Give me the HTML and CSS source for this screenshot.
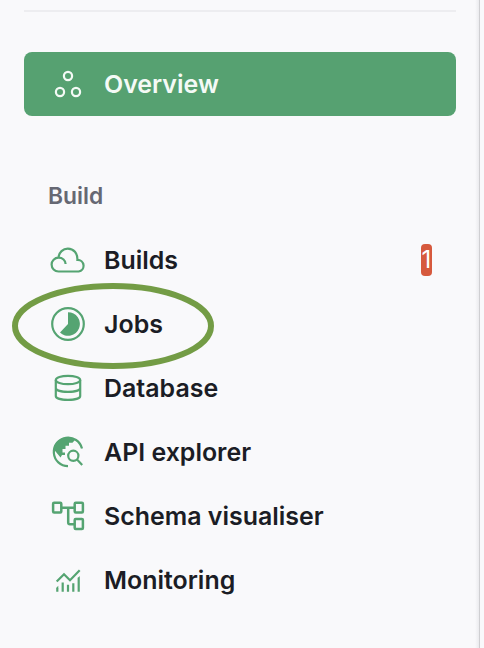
FILE: index.html
```html
<!DOCTYPE html>
<html lang="en">
<head>
<meta charset="utf-8">
<title>Navigation</title>
<link rel="stylesheet" href="styles.css">
</head>
<body>
<nav class="sidebar">
  <hr class="divider">
  <a class="item active">
    <svg class="icon" viewBox="0 0 40 40"><circle cx="20" cy="12" r="4.1"/><circle cx="12" cy="28" r="4.1"/><circle cx="28" cy="28" r="4.1"/></svg>
    <span>Overview</span>
  </a>
  <h2 class="heading">Build</h2>
  <a class="item">
    <svg class="icon" viewBox="0 0 40 40"><path d="M10.5 31.5A6.9 6.9 0 0 1 10.5 17.7C14.5 17.7 17.6 20.3 17.6 24M10.5 17.7C11 12.4 15 8.6 19.8 8.6C25.7 8.6 29.7 13.2 29.4 19.8A5.9 5.9 0 0 1 30.7 31.5H10.5"/></svg>
    <span>Builds</span>
    <span class="badge">1</span>
  </a>
  <a class="item">
    <svg class="icon" viewBox="0 0 40 40"><circle cx="20" cy="20" r="15.8"/><path class="solid" d="M20 8.2A11.8 11.8 0 1 1 12 28.6L20 20Z"/></svg>
    <span>Jobs</span>
    <svg class="ring" viewBox="0 0 204 88"><ellipse cx="102" cy="44" rx="98" ry="40"/></svg>
  </a>
  <a class="item">
    <svg class="icon" viewBox="0 0 40 40"><ellipse cx="20" cy="12" rx="12.2" ry="4.2"/><path d="M7.8 12V28C7.8 33.2 32.2 33.2 32.2 28V12M7.8 20C7.8 25.2 32.2 25.2 32.2 20"/></svg>
    <span>Database</span>
  </a>
  <a class="item">
    <svg class="icon" viewBox="0 0 40 40"><path d="M34 16.5A14.3 14.3 0 1 0 20 34.2"/><path class="solid" d="M5.5 17C7 9.5 13 5 20 5.2L26.5 7.2V8.5L24.5 10.7H21V13.7H17.5V17H14.5V20.5H17V23H14L12.5 25.5Z"/><circle cx="25.3" cy="23.8" r="5.1"/><path d="M29 27.6L34.2 32.9"/></svg>
    <span>API explorer</span>
  </a>
  <a class="item">
    <svg class="icon" viewBox="0 0 40 40"><g stroke-width="2.5"><rect x="5.1" y="6.8" width="8.2" height="9.8" rx="1"/><rect x="26.7" y="6.8" width="8.2" height="9.8" rx="1"/><rect x="26.7" y="23.1" width="8.2" height="9.8" rx="1"/><path d="M14 11.7H26M20.2 12V26.5Q20.2 28.3 22 28.3H26"/></g></svg>
    <span>Schema visualiser</span>
  </a>
  <a class="item">
    <svg class="icon" viewBox="0 0 40 40"><path d="M8.7 21.5L16 14.2L22 20.2L31.7 10.3"/><path d="M9.3 31.7V28M14.7 31.7V22.6M20 31.7V24.7M25.3 31.7V23.2M30.7 31.7V17.7"/><path class="solid" d="M8.3 28.2V27.8L10.3 25.8V28.2ZM29.7 18V18L31.7 16V18Z"/></svg>
    <span>Monitoring</span>
  </a>
</nav>
</body>
</html>
```
FILE: styles.css
```css
* { box-sizing: border-box; }

body {
  margin: 0;
  background: #f9f9fb;
  font-family: Inter, sans-serif;
  color: #1b1d25;
}

.sidebar {
  width: 480px;
  height: 648px;
  padding: 10px 24px 0;
  border-right: 1px solid #cfcfd2;
  background: linear-gradient(to left, #ebebee, #f9f9fb 4px);
  overflow: hidden;
}

.divider {
  height: 2px;
  margin: 0 0 40px;
  border: 0;
  background: #ededf0;
  width: 432px;
}

.item {
  position: relative;
  display: flex;
  align-items: center;
  gap: 16px;
  width: 432px;
  height: 64px;
  padding: 0 24px;
  font-size: 24.95px;
  line-height: 32px;
  font-weight: 600;
}

.active {
  border-radius: 8px;
  background: #56a171;
  color: #f4faf6;
}

.icon {
  width: 40px;
  height: 40px;
  fill: none;
  stroke: #55a472;
  stroke-width: 2.2;
}

.active .icon { stroke: #f4faf6; }

.solid {
  fill: #55a472;
  stroke: none;
}

.heading {
  height: 64px;
  margin: 48px 0 0;
  padding-left: 24px;
  font-size: 22.8px;
  line-height: 64px;
  font-weight: 600;
  color: #666873;
}

.badge {
  display: flex;
  justify-content: center;
  width: 11px;
  height: 32px;
  margin-left: auto;
  border-radius: 4px;
  background: #d6593d;
  color: #fff;
  font-size: 24px;
  font-weight: 400;
}

.ring {
  position: absolute;
  left: -13px;
  top: -10px;
  width: 204px;
  height: 88px;
  fill: none;
  stroke: #739c45;
  stroke-width: 6;
}
```
